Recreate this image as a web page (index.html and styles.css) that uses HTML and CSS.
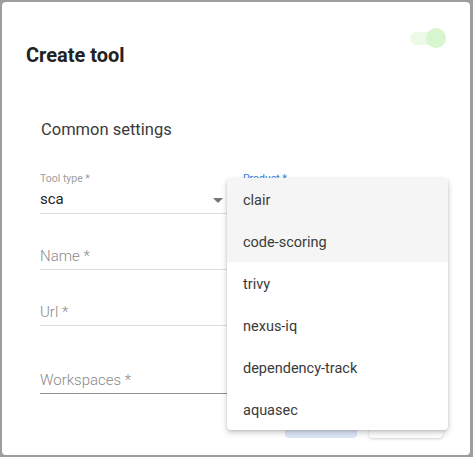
FILE: index.html
```html
<!DOCTYPE html>
<html>
<head>
<meta charset="utf-8">
<link rel="stylesheet" href="styles.css">
</head>
<body>
<div class="backdrop">
  <div class="dialog">
    <div class="header">
      <h2 class="title">Create tool</h2>
      <div class="toggle"><span class="track"></span><span class="knob"></span></div>
    </div>
    <div class="section-title">Common settings</div>
    <div class="grid">
      <div class="field select">
        <div class="label">Tool type *</div>
        <div class="value">sca</div>
        <span class="arrow"></span>
      </div>
      <div class="field">
        <div class="label focus">Product *</div>
      </div>
      <div class="field empty"><div class="placeholder">Name *</div></div>
      <div class="field empty"></div>
      <div class="field empty"><div class="placeholder">Url *</div></div>
      <div class="field empty"></div>
      <div class="field empty tall dark"><div class="placeholder">Workspaces *</div></div>
      <div class="field empty tall"></div>
    </div>
    <div class="actions">
      <div class="btn primary"></div>
      <div class="btn secondary"></div>
    </div>
    <ul class="menu">
      <li class="item active">clair</li>
      <li class="item active">code-scoring</li>
      <li class="item">trivy</li>
      <li class="item">nexus-iq</li>
      <li class="item">dependency-track</li>
      <li class="item">aquasec</li>
    </ul>
  </div>
</div>
</body>
</html>
```

FILE: styles.css
```css
* { box-sizing: border-box; }
html, body { margin: 0; padding: 0; }
body {
  width: 473px;
  height: 457px;
  background: #9e9e9e;
  font-family: Roboto, "Liberation Sans", sans-serif;
  overflow: hidden;
}
.backdrop {
  padding: 2px 3px 2px 2px;
  height: 457px;
}
.dialog {
  position: relative;
  width: 468px;
  height: 453px;
  background: #fff;
  border-radius: 4px;
}
.header {
  position: relative;
  display: flex;
  align-items: center;
  padding: 38px 24px 0 24px;
  height: 68px;
}
.title {
  margin: 0;
  font-size: 20px;
  font-weight: 700;
  color: #222;
  line-height: 24px;
}
.toggle {
  position: absolute;
  left: 408px;
  top: 26px;
  width: 36px;
  height: 20px;
}
.track {
  position: absolute;
  left: 0;
  top: 4px;
  width: 30px;
  height: 13px;
  border-radius: 7px;
  background: #ebf9e6;
}
.knob {
  position: absolute;
  left: 16px;
  top: 0;
  width: 20px;
  height: 20px;
  border-radius: 50%;
  background: #d7f5cf;
}
.section-title {
  margin: 50px 0 0 39px;
  font-size: 16.5px;
  color: #3a3a3a;
  line-height: 20px;
}
.grid {
  display: grid;
  grid-template-columns: 188px 188px;
  column-gap: 15px;
  margin: 30px 0 0 38px;
  row-gap: 12px;
}
.field {
  position: relative;
  height: 44px;
  border-bottom: 1px solid #dcdcdc;
}
.field.tall { margin-top: 12px; }
.field.dark { border-bottom-color: #8f8f8f; }
.label {
  font-size: 10.5px;
  color: #9e9e9e;
  line-height: 14px;
  padding-top: 2px;
}
.label.focus { color: #2f80d6; }
.value {
  font-size: 15px;
  color: #222;
  line-height: 20px;
  padding-top: 3px;
}
.arrow {
  position: absolute;
  right: 5px;
  top: 28px;
  width: 0;
  height: 0;
  border-left: 5px solid transparent;
  border-right: 5px solid transparent;
  border-top: 5px solid #757575;
}
.placeholder {
  padding-top: 20px;
  font-size: 15px;
  font-weight: 300;
  color: #8a8a8a;
  line-height: 20px;
}
.actions {
  position: absolute;
  right: 27px;
  bottom: 17px;
  display: flex;
  gap: 12px;
}
.btn {
  height: 36px;
  border-radius: 4px;
}
.primary {
  width: 72px;
  background: #dde8f8;
}
.secondary {
  width: 74px;
  background: #fff;
  box-shadow: 0 1px 3px rgba(0,0,0,0.18);
}
.menu {
  position: absolute;
  left: 225px;
  top: 176px;
  width: 221px;
  margin: 0;
  padding: 0;
  list-style: none;
  background: #fff;
  border-radius: 4px;
  box-shadow: 0 3px 6px rgba(0,0,0,0.18), 0 1px 3px rgba(0,0,0,0.12);
  overflow: hidden;
}
.item {
  height: 42px;
  line-height: 42px;
  padding: 2px 0 0 16px;
  font-size: 14.5px;
  color: #3a3a3a;
}
.item.active { background: #f5f5f5; }
```
